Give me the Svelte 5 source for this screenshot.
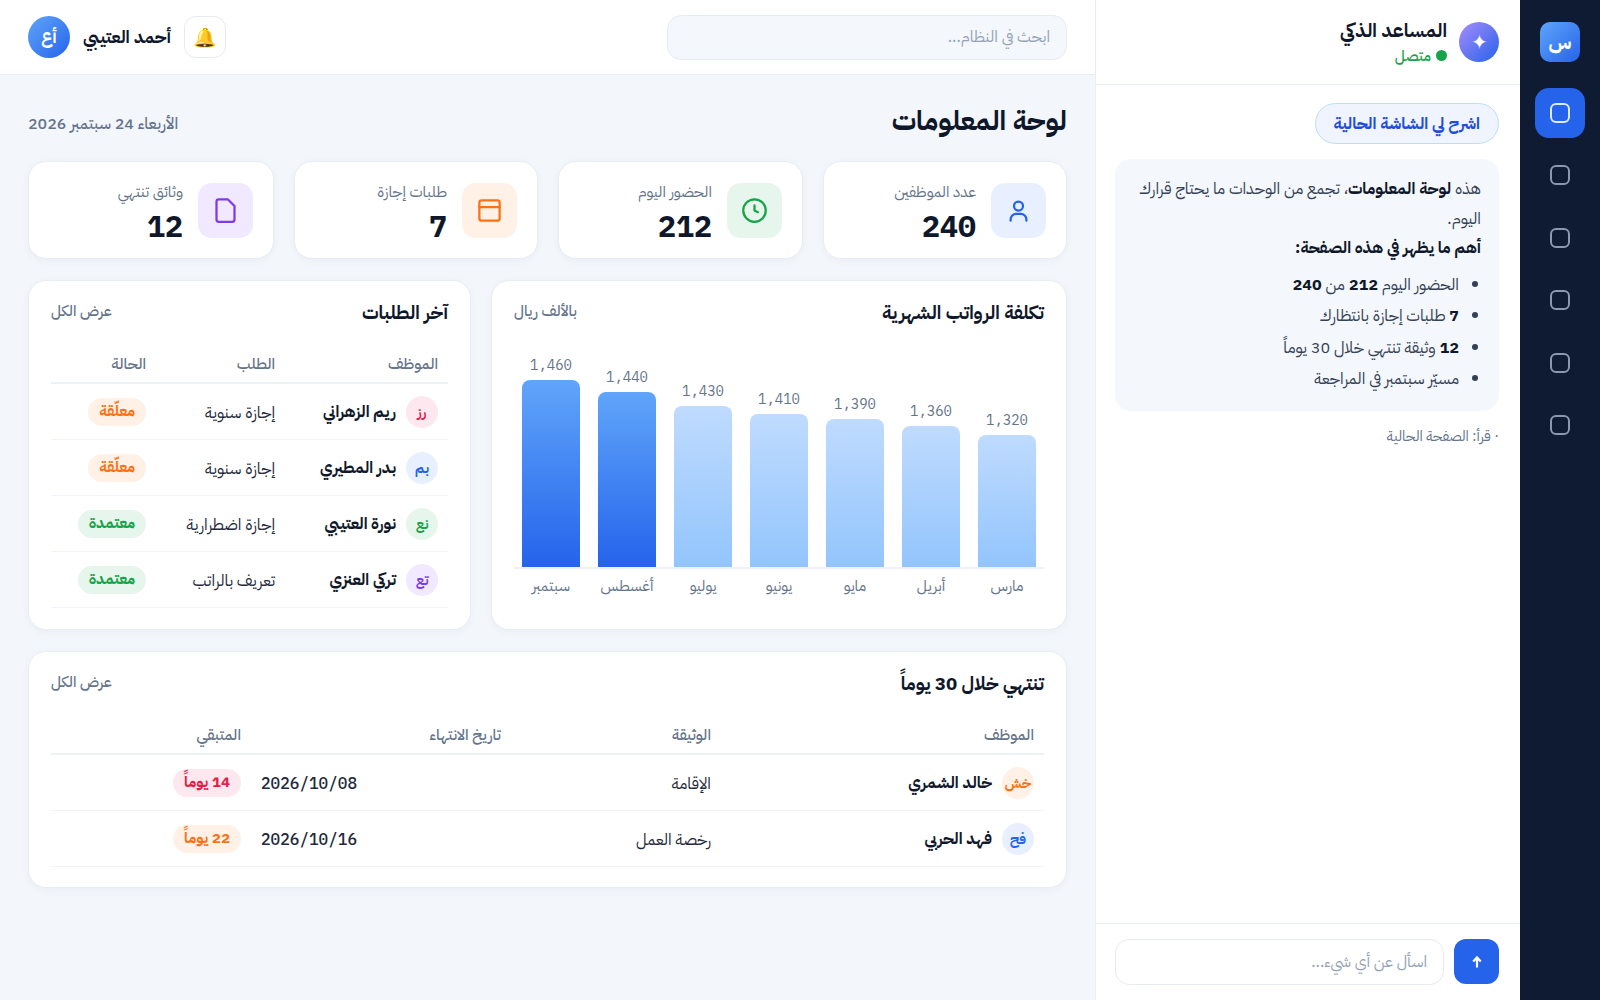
<script>
  const kpis = [
    { label: 'عدد الموظفين', value: '240', tone: 'blue', icon: 'user' },
    { label: 'الحضور اليوم', value: '212', tone: 'green', icon: 'clock' },
    { label: 'طلبات إجازة', value: '7', tone: 'orange', icon: 'panel' },
    { label: 'وثائق تنتهي', value: '12', tone: 'purple', icon: 'doc' }
  ];
  const bars = [
    { m: 'مارس', v: '1,320', h: 132 },
    { m: 'أبريل', v: '1,360', h: 141 },
    { m: 'مايو', v: '1,390', h: 148 },
    { m: 'يونيو', v: '1,410', h: 153 },
    { m: 'يوليو', v: '1,430', h: 161 },
    { m: 'أغسطس', v: '1,440', h: 175, on: true },
    { m: 'سبتمبر', v: '1,460', h: 187, on: true }
  ];
  const requests = [
    { i: 'رز', tone: 'pink', n: 'ريم الزهراني', r: 'إجازة سنوية', s: 'معلّقة', st: 'orange' },
    { i: 'بم', tone: 'blue', n: 'بدر المطيري', r: 'إجازة سنوية', s: 'معلّقة', st: 'orange' },
    { i: 'نع', tone: 'green', n: 'نورة العتيبي', r: 'إجازة اضطرارية', s: 'معتمدة', st: 'green' },
    { i: 'تع', tone: 'purple', n: 'تركي العنزي', r: 'تعريف بالراتب', s: 'معتمدة', st: 'green' }
  ];
  const docs = [
    { i: 'خش', tone: 'orange', n: 'خالد الشمري', d: 'الإقامة', e: '2026/10/08', s: '14 يوماً', st: 'pink' },
    { i: 'فح', tone: 'blue', n: 'فهد الحربي', d: 'رخصة العمل', e: '2026/10/16', s: '22 يوماً', st: 'orange' }
  ];
</script>

<div class="app" dir="rtl">
  <nav class="rail">
    <div class="logo">س</div>
    <div class="rail-items">
      {#each [0, 1, 2, 3, 4, 5] as n}
        <div class="rail-item" class:active={n === 0}><span class="rail-icon"></span></div>
      {/each}
    </div>
  </nav>

  <aside class="assistant">
    <header class="as-head">
      <div class="as-avatar">✦</div>
      <div>
        <div class="as-name">المساعد الذكي</div>
        <div class="as-status"><span class="dot"></span>متصل</div>
      </div>
    </header>
    <div class="as-body">
      <button class="chip">اشرح لي الشاشة الحالية</button>
      <div class="bubble">
        <p>هذه <b>لوحة المعلومات</b>، تجمع من الوحدات ما يحتاج قرارك اليوم.</p>
        <p><b>أهم ما يظهر في هذه الصفحة:</b></p>
        <ul>
          <li>الحضور اليوم <b>212</b> من <b>240</b></li>
          <li><b>7</b> طلبات إجازة بانتظارك</li>
          <li><b>12</b> وثيقة تنتهي خلال 30 يوماً</li>
          <li>مسيّر سبتمبر في المراجعة</li>
        </ul>
      </div>
      <div class="read">· قرأ: الصفحة الحالية</div>
    </div>
    <footer class="composer">
      <button class="send" aria-label="إرسال">
        <svg width="14" height="14" viewBox="0 0 14 14"><path d="M7 12.5V3M3.2 6.4 7 2.4l3.8 4" fill="none" stroke="#fff" stroke-width="2.2"/></svg>
      </button>
      <div class="ask">اسأل عن أي شيء...</div>
    </footer>
  </aside>

  <main class="main">
    <header class="topbar">
      <div class="search">ابحث في النظام...</div>
      <div class="user">
        <button class="bell">🔔</button>
        <span class="user-name">أحمد العتيبي</span>
        <span class="user-avatar">أع</span>
      </div>
    </header>

    <div class="content">
      <div class="page-head">
        <h1>لوحة المعلومات</h1>
        <span class="date">الأربعاء 24 سبتمبر 2026</span>
      </div>

      <section class="kpis">
        {#each kpis as k}
          <div class="card kpi">
            <div class="kpi-icon {k.tone}">
              <svg width="27" height="27" viewBox="0 0 24 24" fill="none" stroke="currentColor" stroke-width="2" stroke-linecap="round" stroke-linejoin="round">
                {#if k.icon === 'user'}
                  <circle cx="12" cy="8" r="4" /><path d="M5 21v-1a5 5 0 0 1 5-5h4a5 5 0 0 1 5 5v1" />
                {:else if k.icon === 'clock'}
                  <circle cx="12" cy="12" r="10" /><path d="M12 7.5V12l3 1.5" />
                {:else if k.icon === 'panel'}
                  <rect x="3" y="3" width="18" height="18" rx="2" /><path d="M3 9h18" />
                {:else}
                  <path d="M14 2H6a2 2 0 0 0-2 2v16a2 2 0 0 0 2 2h12a2 2 0 0 0 2-2V8z" />
                {/if}
              </svg>
            </div>
            <div class="kpi-text">
              <div class="kpi-label">{k.label}</div>
              <div class="kpi-value">{k.value}</div>
            </div>
          </div>
        {/each}
      </section>

      <section class="mid">
        <div class="card panel">
          <div class="panel-head"><h2>تكلفة الرواتب الشهرية</h2><span>بالألف ريال</span></div>
          <div class="chart">
            {#each bars as b}
              <div class="col">
                <span class="bar-val">{b.v}</span>
                <div class="bar" class:on={b.on} style="height:{b.h}px"></div>
              </div>
            {/each}
          </div>
          <div class="months">
            {#each bars as b}<span>{b.m}</span>{/each}
          </div>
        </div>

        <div class="card panel">
          <div class="panel-head"><h2>آخر الطلبات</h2><span>عرض الكل</span></div>
          <table class="req">
            <thead><tr><th>الموظف</th><th>الطلب</th><th>الحالة</th></tr></thead>
            <tbody>
              {#each requests as r}
                <tr>
                  <td><div class="person"><span class="ini {r.tone}">{r.i}</span><b>{r.n}</b></div></td>
                  <td>{r.r}</td>
                  <td><span class="pill {r.st}">{r.s}</span></td>
                </tr>
              {/each}
            </tbody>
          </table>
        </div>
      </section>

      <section class="card panel wide">
        <div class="panel-head"><h2>تنتهي خلال 30 يوماً</h2><span>عرض الكل</span></div>
        <table class="docs">
          <thead><tr><th>الموظف</th><th>الوثيقة</th><th>تاريخ الانتهاء</th><th>المتبقي</th></tr></thead>
          <tbody>
            {#each docs as d}
              <tr>
                <td><div class="person"><span class="ini {d.tone}">{d.i}</span><b>{d.n}</b></div></td>
                <td>{d.d}</td>
                <td class="mono" dir="ltr">{d.e}</td>
                <td><span class="pill {d.st}">{d.s}</span></td>
              </tr>
            {/each}
          </tbody>
        </table>
      </section>
    </div>
  </main>
</div>

<style>
  :global(body) { margin: 0; background: #f3f6fb; font-family: "IBM Plex Sans Arabic", "Noto Sans Arabic", "Inter", "Noto Sans", sans-serif; color: #0f172a; }
  * { box-sizing: border-box; }
  .app { display: flex; height: 1000px; width: 1600px; overflow: hidden; }

  .rail { width: 80px; flex: none; background: #0f1b33; display: flex; flex-direction: column; align-items: center; padding-top: 22px; }
  .logo { width: 40px; height: 40px; border-radius: 10px; background: linear-gradient(135deg, #60a5fa, #2563eb); color: #fff; font-weight: 700; font-size: 20px; display: flex; align-items: center; justify-content: center; }
  .rail-items { margin-top: 26px; display: flex; flex-direction: column; gap: 12.4px; }
  .rail-item { width: 50px; height: 50px; border-radius: 14px; display: flex; align-items: center; justify-content: center; }
  .rail-item.active { background: #2563eb; }
  .rail-icon { width: 20px; height: 20px; border: 2px solid #8b98ad; border-radius: 6px; }
  .rail-item.active .rail-icon { border-color: #dbeafe; }

  .assistant { width: 425px; flex: none; background: #fff; border-inline-end: 1px solid #e8edf5; display: flex; flex-direction: column; }
  .as-head { height: 85px; flex: none; border-bottom: 1px solid #e8edf5; padding: 0 21px; display: flex; align-items: center; gap: 12px; }
  .as-avatar { width: 40px; height: 40px; border-radius: 50%; background: linear-gradient(135deg, #a78bfa, #2563eb); color: #fff; font-size: 20px; display: flex; align-items: center; justify-content: center; }
  .as-name { font-size: 19px; font-weight: 700; line-height: 22px; margin-top: 2px; }
  .as-status { font-size: 15px; color: #16a34a; display: flex; align-items: center; gap: 5px; line-height: 22px; font-weight: 500; margin-top: 3px; }
  .dot { width: 11px; height: 11px; border-radius: 50%; background: #16a34a; }
  .as-body { flex: 1; padding: 18px 21px 18px 19px; }
  .chip { display: block; height: 41px; padding: 0 18px; border-radius: 21px; border: 1px solid #bfdbfe; background: #eff4ff; color: #1d4ed8; font: inherit; font-size: 16.3px; font-weight: 700; }
  .bubble { margin-top: 15px; background: #f4f7fb; border-radius: 16px; padding: 15px 18px 12px; font-size: 16.2px; color: #334155; line-height: 29.5px; height: 252px; }
  .bubble p { margin: 0; }
  .bubble b { color: #0f172a; font-weight: 700; }
  .bubble ul { margin: 6px 0 0; padding-inline-start: 22px; }
  .bubble li { line-height: 31.5px; }
  .read { margin-top: 15px; font-size: 14.5px; color: #64748b; line-height: 20px; }
  .composer { height: 77px; flex: none; border-top: 1px solid #e8edf5; padding: 15px 21px 15px 19px; display: flex; gap: 10px; }
  .send { width: 45px; height: 45px; flex: none; border: 0; border-radius: 12px; background: #2563eb; display: flex; align-items: center; justify-content: center; padding: 0; }
  .ask { flex: 1; height: 46px; border: 1px solid #e6eaf3; border-radius: 14px; padding: 0 16px; line-height: 44px; font-size: 16px; color: #94a3b8; }

  .main { flex: 1; min-width: 0; display: flex; flex-direction: column; }
  .topbar { height: 75px; flex: none; background: #fff; border-bottom: 1px solid #e8edf5; padding: 0 28px; display: flex; align-items: center; justify-content: space-between; }
  .search { width: 400px; height: 45px; background: #f4f7fb; border: 1px solid #e6eaf3; border-radius: 14px; padding: 0 16px; line-height: 43px; font-size: 16px; color: #94a3b8; }
  .user { display: flex; align-items: center; gap: 13px; flex-direction: row; }
  .bell { width: 42px; height: 42px; border: 1px solid #e6eaf3; border-radius: 12px; background: #fff; font-size: 19px; padding: 0; }
  .user-name { font-size: 17.4px; font-weight: 700; }
  .user-avatar { width: 42px; height: 42px; border-radius: 50%; background: linear-gradient(135deg, #60a5fa, #2563eb); color: #fff; font-weight: 700; font-size: 17px; display: flex; align-items: center; justify-content: center; }

  .content { padding: 22px 28px; display: flex; flex-direction: column; gap: 21px; }
  .page-head { display: flex; justify-content: space-between; align-items: center; height: 43px; }
  h1 { margin: 3px 0 0; font-size: 27.5px; font-weight: 700; color: #0f172a; }
  .date { font-size: 16px; color: #64748b; font-weight: 500; margin-top: 10px; }
  .card { background: #fff; border: 1px solid #e8edf5; border-radius: 18px; box-shadow: 0 2px 8px rgba(15, 23, 42, 0.04); }
  .kpis { display: grid; grid-template-columns: 244fr 245fr 244fr 246fr; gap: 20px; }
  .kpi { height: 98px; padding: 0 20px; display: flex; align-items: center; gap: 15px; }
  .kpi-icon { width: 55px; height: 55px; border-radius: 14px; display: flex; align-items: center; justify-content: center; }
  .blue { background: #e8f0ff; color: #2563eb; }
  .green { background: #e6f6ec; color: #16a34a; }
  .orange { background: #fff1e5; color: #f97316; }
  .purple { background: #f0e9ff; color: #7c3aed; }
  .pink { background: #fde8ef; color: #e11d48; }
  .kpi-text { padding-top: 10px; }
  .kpi-label { font-size: 15.5px; color: #64748b; line-height: 20px; }
  .kpi-value { font-size: 30px; font-weight: 700; font-family: "IBM Plex Mono", "DejaVu Sans Mono", monospace; color: #0f172a; line-height: 44px; margin-top: 2px; }

  .mid { display: grid; grid-template-columns: 1.3fr 1fr; gap: 20px; }
  .panel { padding: 20px 22px; }
  .mid .panel { height: 350px; }
  .wide { height: 237px; }
  .panel-head { display: flex; justify-content: space-between; align-items: flex-start; height: 38px; }
  h2 { margin: 0; font-size: 18.7px; font-weight: 700; line-height: 25px; color: #0f172a; }
  .panel-head span { font-size: 15px; color: #64748b; font-weight: 500; line-height: 21px; }

  .chart { height: 230px; display: flex; flex-direction: row; align-items: flex-end; gap: 18px; padding: 0 8px; border-bottom: 2px solid #eef2f7; }
  .col { flex: 1; display: flex; flex-direction: column; align-items: center; }
  .bar-val { font-family: "IBM Plex Mono", "DejaVu Sans Mono", monospace; font-size: 14px; color: #64748b; line-height: 20px; margin-bottom: 5px; }
  .bar { width: 100%; border-radius: 8px 8px 0 0; background: linear-gradient(180deg, #bfdbfe, #93c5fd); }
  .bar.on { background: linear-gradient(180deg, #60a5fa, #2563eb); }
  .months { display: flex; gap: 18px; padding: 0 8px; margin-top: 6px; }
  .months span { flex: 1; text-align: center; font-size: 15.4px; color: #64748b; line-height: 22px; }

  table { width: 100%; border-collapse: collapse; table-layout: fixed; }
  th { font-size: 15.5px; font-weight: 500; color: #64748b; text-align: start; padding: 6px 10px 0; height: 44px; border-bottom: 2px solid #eef2f7; }
  td { font-size: 16.2px; padding: 2px 10px 0; height: 56px; border-bottom: 1px solid #f1f4f8; color: #1e293b; }
  .req th:nth-child(1) { width: 163px; }
  .req th:nth-child(2) { width: 129px; }
  .docs th:nth-child(1) { width: 323px; }
  .docs th:nth-child(2) { width: 210px; }
  .docs th:nth-child(3) { width: 260px; }
  .mono { font-family: "IBM Plex Mono", "DejaVu Sans Mono", monospace; font-weight: 500; font-size: 16px; text-align: left; }
  .person { display: flex; align-items: center; gap: 10px; }
  .person b { font-weight: 700; color: #0f172a; font-size: 16px; }
  .ini { width: 32px; height: 32px; border-radius: 50%; font-size: 14px; font-weight: 700; display: flex; align-items: center; justify-content: center; flex: none; }
  .pill { display: inline-block; padding: 0 11px; height: 28px; line-height: 27px; border-radius: 14px; font-size: 15.2px; font-weight: 700; }
</style>
